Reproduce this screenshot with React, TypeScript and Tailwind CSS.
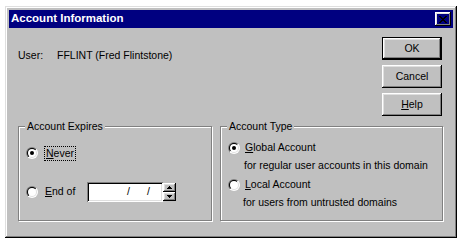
import React from "react";

const raised =
  "shadow-[inset_-1px_-1px_#000,inset_1px_1px_#fff,inset_-2px_-2px_#808080,inset_2px_2px_#dfdfdf]";

function Radio({ checked }: { checked?: boolean }) {
  return (
    <svg width="12" height="12" viewBox="0 0 12 12" className="shrink-0">
      <defs>
        <linearGradient id="radio-out" x1="0" y1="0" x2="1" y2="1">
          <stop offset="0.5" stopColor="#808080" />
          <stop offset="0.5" stopColor="#ffffff" />
        </linearGradient>
        <linearGradient id="radio-in" x1="0" y1="0" x2="1" y2="1">
          <stop offset="0.5" stopColor="#000000" />
          <stop offset="0.5" stopColor="#dfdfdf" />
        </linearGradient>
      </defs>
      <circle cx="6" cy="6" r="6" fill="url(#radio-out)" />
      <circle cx="6" cy="6" r="5" fill="url(#radio-in)" />
      <circle cx="6" cy="6" r="4" fill="#fff" />
      {checked && <circle cx="6" cy="6" r="2" fill="#000" />}
    </svg>
  );
}

function Button({ label, def }: { label: React.ReactNode; def?: boolean }) {
  return (
    <div
      className={`w-[60px] h-[23px] flex items-center justify-center ${
        def ? "border border-black" : ""
      }`}
    >
      <div className={`w-full h-full flex items-center justify-center ${raised}`}>
        {label}
      </div>
    </div>
  );
}

function Group({
  title,
  className,
  children,
}: {
  title: string;
  className: string;
  children: React.ReactNode;
}) {
  return (
    <fieldset
      className={`border border-[#808080] shadow-[1px_1px_0_#fff,inset_1px_1px_0_#fff] ${className}`}
    >
      <legend className="ml-[6px] px-[2px] bg-[#c0c0c0] leading-[13px]">
        {title}
      </legend>
      {children}
    </fieldset>
  );
}

export default function App() {
  return (
    <div className="w-[464px] h-[246px] bg-white pt-[6px] pl-[5px] font-['Liberation_Sans',Arial,sans-serif] text-[10.5px] text-black">
      <div className="w-[452px] h-[232px] bg-[#c0c0c0] p-[4px] flex flex-col shadow-[inset_-1px_-1px_#000,inset_1px_1px_#dfdfdf,inset_-2px_-2px_#808080,inset_2px_2px_#fff]">
        <div className="h-[18px] bg-[#000080] flex items-center pl-[2px] pr-[2px]">
          <span className="text-white font-bold text-[11.5px]">Account Information</span>
          <div className={`ml-auto w-[16px] h-[14px] flex items-center justify-center ${raised}`}>
            <svg width="8" height="7" viewBox="0 0 8 7" shapeRendering="crispEdges">
              <path
                d="M0 0h2v1H0zM6 0h2v1H6zM1 1h2v1H1zM5 1h2v1H5zM2 2h4v1H2zM3 3h2v1H3zM2 4h4v1H2zM1 5h2v1H1zM5 5h2v1H5zM0 6h2v1H0zM6 6h2v1H6z"
                fill="#000"
              />
            </svg>
          </div>
        </div>

        <div className="flex">
          <div className="pl-[9px] pt-[20px] flex">
            <span className="w-[39px]">User:</span>
            <span>FFLINT (Fred Flintstone)</span>
          </div>
          <div className="ml-auto pr-[11px] pt-[9px] flex flex-col gap-[5px]">
            <Button label="OK" def />
            <Button label="Cancel" />
            <Button
              label={
                <span>
                  <span className="underline">H</span>elp
                </span>
              }
            />
          </div>
        </div>

        <div className="flex gap-[8px] pl-[9px] mt-[4px]">
          <Group title="Account Expires" className="w-[194px] h-[101px]">
            <div className="pl-[7px] pt-[12px] flex items-center h-[28px]">
              <Radio checked />
              <span className="ml-[6px] border border-dotted border-black px-[1px] leading-[13px]">
                <span className="underline">N</span>ever
              </span>
            </div>
            <div className="pl-[7px] mt-[21px] flex items-center h-[20px]">
              <Radio />
              <span className="ml-[7px] w-[42px]">
                <span className="underline">E</span>nd of
              </span>
              <div className="w-[76px] h-[20px] bg-white flex items-center shadow-[inset_1px_1px_#808080,inset_-1px_-1px_#fff,inset_2px_2px_#000,inset_-2px_-2px_#dfdfdf]">
                <span className="pl-[40px]">/</span>
                <span className="pl-[17px]">/</span>
              </div>
              <div className="w-[13px] h-[18px] flex flex-col">
                <div className={`h-[9px] flex items-center justify-center ${raised}`}>
                  <svg width="5" height="3" viewBox="0 0 5 3" shapeRendering="crispEdges">
                    <path d="M2 0h1v1H2zM1 1h3v1H1zM0 2h5v1H0z" fill="#000" />
                  </svg>
                </div>
                <div className={`h-[9px] flex items-center justify-center ${raised}`}>
                  <svg width="5" height="3" viewBox="0 0 5 3" shapeRendering="crispEdges">
                    <path d="M0 0h5v1H0zM1 1h3v1H1zM2 2h1v1H2z" fill="#000" />
                  </svg>
                </div>
              </div>
            </div>
          </Group>

          <Group title="Account Type" className="w-[223px] h-[101px]">
            <div className="pl-[7px] pt-[8px] flex items-center h-[21px]">
              <Radio checked />
              <span className="ml-[5px]">
                <span className="underline">G</span>lobal Account
              </span>
            </div>
            <div className="pl-[23px] mt-[5px] leading-[13px]">
              for regular user accounts in this domain
            </div>
            <div className="pl-[7px] mt-[6px] flex items-center h-[13px]">
              <Radio />
              <span className="ml-[5px]">
                <span className="underline">L</span>ocal Account
              </span>
            </div>
            <div className="pl-[22px] mt-[5px] leading-[13px]">
              for users from untrusted domains
            </div>
          </Group>
        </div>
      </div>
    </div>
  );
}
